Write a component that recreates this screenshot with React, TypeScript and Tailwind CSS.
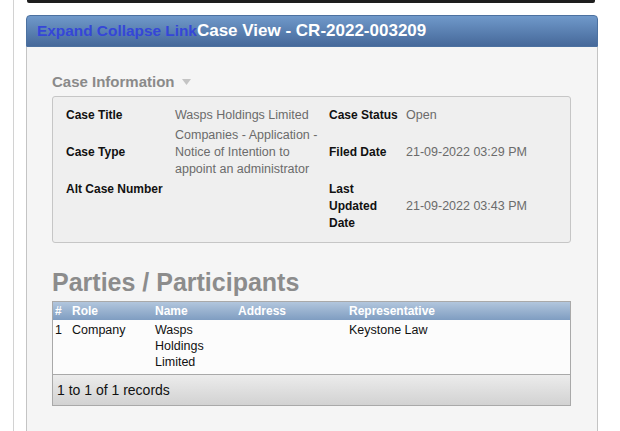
const FONT = { fontFamily: '"Liberation Sans", Arial, Helvetica, sans-serif' }

const parties = [
  { n: '1', role: 'Company', name: 'Wasps Holdings Limited', address: '', rep: 'Keystone Law' }
]

function CaseInfo() {
  return (
    <div className="mr-[26px] rounded-[3px] border border-[#c6c6c6] bg-[#efefef] pb-[10px] pl-[13px] pt-[10px]">
      <div className="grid grid-cols-[109px_154px_77px_1fr] gap-y-[3px] text-[12px] leading-[17px]">
        <div className="self-center font-bold text-[#111]">Case Title</div>
        <div className="self-center text-[12.5px] text-[#6b6b6b]">Wasps Holdings Limited</div>
        <div className="self-center pr-[6px] font-bold text-[#111]">Case Status</div>
        <div className="self-center text-[12.5px] text-[#6b6b6b]">Open</div>

        <div className="self-center font-bold text-[#111]">Case Type</div>
        <div className="self-center pr-[4px] text-[12.5px] text-[#6b6b6b]">
          Companies - Application - Notice of Intention to appoint an administrator
        </div>
        <div className="self-center pr-[6px] font-bold text-[#111]">Filed Date</div>
        <div className="self-center text-[12.5px] text-[#6b6b6b]">21-09-2022 03:29 PM</div>

        <div className="self-start font-bold text-[#111]">Alt Case Number</div>
        <div className="self-center text-[12.5px] text-[#6b6b6b]"></div>
        <div className="self-center pr-[6px] font-bold text-[#111]">Last Updated Date</div>
        <div className="self-center text-[12.5px] text-[#6b6b6b]">21-09-2022 03:43 PM</div>
      </div>
    </div>
  )
}

function PartiesTable() {
  const cols = 'grid grid-cols-[17px_83px_83px_111px_1fr] pl-[2px]'
  return (
    <div className="mr-[26px] border border-[#a9a9a9]">
      <div
        className={`${cols} h-[18px] items-center bg-gradient-to-b from-[#b2c6dd] to-[#7f9dc1] text-[12px] font-bold text-white`}
      >
        <div>#</div>
        <div>Role</div>
        <div>Name</div>
        <div>Address</div>
        <div>Representative</div>
      </div>
      {parties.map((p) => (
        <div key={p.n} className={`${cols} bg-[#fcfcfc] pb-[4px] pt-[2px] text-[12.5px] leading-[16px] text-[#111]`}>
          <div>{p.n}</div>
          <div>{p.role}</div>
          <div className="pr-[6px]">{p.name}</div>
          <div>{p.address}</div>
          <div>{p.rep}</div>
        </div>
      ))}
      <div className="flex h-[31px] items-center border-t border-[#a9a9a9] bg-gradient-to-b from-[#ececec] to-[#d2d2d2] pl-[4px] text-[14px] text-[#111]">
        1 to 1 of 1 records
      </div>
    </div>
  )
}

export default function App() {
  return (
    <div className="h-[431px] w-[620px] overflow-hidden bg-white pl-[13px]" style={FONT}>
      <div className="flex h-full flex-col border-l border-[#d2d2d2] pl-[12px] pr-[22px]">
        <div className="ml-[1px] h-[3px] w-[568px] rounded-b-[2px] bg-[#1e1e1e]" />
        <div className="mt-[12px] flex h-[32px] items-center rounded-t-[4px] border border-[#4c71a0] bg-gradient-to-b from-[#7099ca] to-[#46699a] pl-[10px]">
          <a className="text-[15.4px] font-bold text-[#3546d8]" href="#">
            Expand Collapse Link
          </a>
          <span className="text-[17px] font-bold text-white">Case View - CR-2022-003209</span>
        </div>
        <div className="flex-1 border-x border-[#c4c4c4] bg-[#f5f5f5] pl-[25px]">
          <div className="mt-[26px] flex items-center gap-[7px] text-[15px] font-bold leading-[18px] text-[#8a8a8a]">
            Case Information
            <svg width="9" height="6" viewBox="0 0 9 6">
              <path d="M0 0h9L4.5 6z" fill="#c4c4c4" />
            </svg>
          </div>
          <div className="mt-[5px]">
            <CaseInfo />
          </div>
          <div className="mt-[24px] text-[25px] font-bold leading-[30px] text-[#8c8c8c]">Parties / Participants</div>
          <div className="mt-[4px]">
            <PartiesTable />
          </div>
        </div>
      </div>
    </div>
  )
}
